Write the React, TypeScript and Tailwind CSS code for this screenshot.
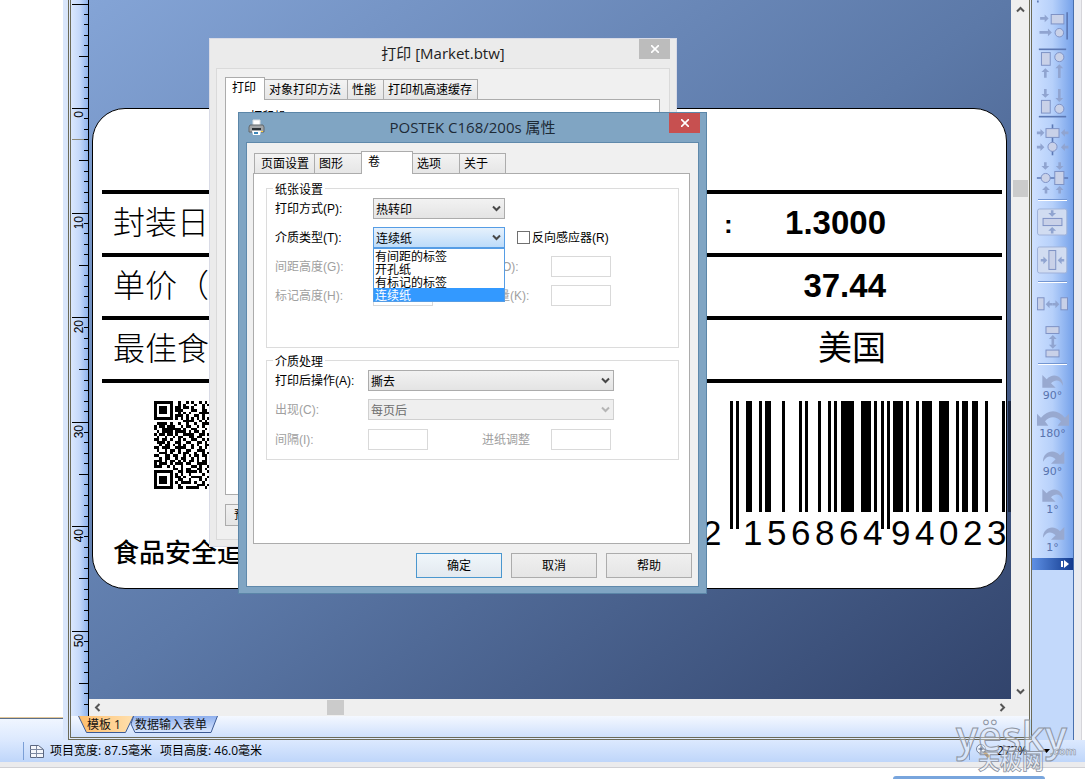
import { useState } from "react";
import type { ReactNode } from "react";

const BARS = [
  [0, 3, 1], [6, 3, 1], [16, 6, 0], [29, 3, 0], [35, 6, 0], [52, 3, 0], [69, 3, 0],
  [75, 3, 0], [88, 3, 0], [98, 3, 0], [104, 3, 0], [111, 13, 0], [131, 10, 0],
  [144, 3, 0], [151, 3, 1], [157, 3, 1], [163, 10, 0], [176, 3, 0], [186, 3, 0],
  [192, 10, 0], [209, 10, 0], [226, 3, 0], [232, 6, 0], [242, 6, 0], [255, 3, 0],
  [272, 3, 0],
];

const QR = [
  "#######..#..#.#..#.#.",
  "#.....#..#.#...#..#.#",
  "#.###.#.##.##.#...#..",
  "#.###.#.###...##..##.",
  "#.###.#..#.#.#...####",
  "#.....#.###.#..##.#..",
  "#######.#.#.#.#.#.#.#",
  "...........####..#.#.",
  ".####.#..#..#..#..###",
  "#.##.###..#.##..#.#..",
  "#..#######.#..##...#.",
  ".#.####.####.#.##.#..",
  "#.##.##.#..####..##.#",
  ".#..#..#.##..##.##...",
  "##.##.#..#.#..##..#.#",
  ".###.#..##..##..##.#.",
  "..#.##.#.#.#..#.#..##",
  "##.###..####..#..#.#.",
  ".#..#.##.#..##..###..",
  "..###.#..#.##..#..#.#",
  "##..##.##..#.#.##.##.",
  "..#.##..#.##..#.#..#.",
  "###.#.##.#.#.##.#.##.",
  "#.###.#.###.##..####.",
  "###..#.#..#...##.#..#",
  ".......##.#.##..##.#.",
  "#######..##.####.#..#",
  "#.....#.#.#..#....#..",
  "#.###.#.##.#..####..#",
  "#.###.#..##..#...#.#.",
  "#.###.#.#.####.#..#..",
  "#.....#..#......###.#",
  "#######..##.#####..#.",
];

const CJK = "font-['Open_Sans','Noto_Sans_CJK_SC',sans-serif]";
const FORM = "font-['Liberation_Sans','Noto_Sans_CJK_SC',sans-serif]";

function Ruler() {
  const ticks: number[] = [];
  for (let mm = -10; mm <= 57; mm++) ticks.push(mm);
  return (
    <div className="w-[18px] shrink-0 overflow-hidden border-r border-black bg-linear-to-r from-[#dbe8fd] via-[#c5d9fa] to-[#8fb3ec]">
      <svg width="18" height="716" aria-label="ruler">
        {ticks.map((mm) => {
          const y = Math.round(108 + mm * 10.45);
          const start = mm % 10 === 0 ? 1 : mm % 5 === 0 ? 8 : 13;
          return <rect key={mm} x={start} y={y} width={18 - start} height="1" fill="#000" />;
        })}
        <rect x="1" y="139" width="12" height="1" fill="#8d8a78" />
        {[0, 10, 20, 30, 40, 50].map((mm) => (
          <text
            key={mm}
            transform={`translate(12 ${Math.round(111 + mm * 10.45)}) rotate(-90)`}
            textAnchor="end"
            fontSize="12"
            fontFamily="Liberation Sans, sans-serif"
          >
            {mm}
          </text>
        ))}
      </svg>
    </div>
  );
}

function LabelRow({ name, value, colon }: { name: string; value: string; colon?: boolean }) {
  return (
    <div className="flex h-[59px] items-center pr-[120px] pb-[2px] pl-[20px]">
      <span className="text-[32px] font-light">{name}</span>
      <span className="ml-auto w-[60px] pt-1 text-[26px] font-bold">{colon ? ":" : ""}</span>
      <span className="w-[102px] text-right text-[33px] font-bold whitespace-nowrap">{value}</span>
    </div>
  );
}

function Rule() {
  return <div className="mr-1 ml-[9px] h-1 bg-black" />;
}

function LabelCanvas() {
  return (
    <div className="relative min-h-0 flex-1 overflow-hidden bg-linear-to-br from-[#84a4d6] via-[#5c79a8] to-[#32446c]">
      <div className="absolute top-[108px] left-[3px] h-[481px] w-[915px] rounded-[33px] border border-black bg-white pt-[81px] font-['Liberation_Sans','Noto_Sans_CJK_SC',sans-serif] text-black">
        <Rule />
        <LabelRow name="封装日" value="1.3000" colon />
        <Rule />
        <LabelRow name="单价（" value="37.44" />
        <Rule />
        <div className="flex h-[59px] items-center pr-[120px] pb-[2px] pl-[20px]">
          <span className="text-[32px] font-light">最佳食</span>
          <span className="ml-auto text-[34px]">美国</span>
        </div>
        <Rule />
        <svg className="mt-[18px] ml-[61px] h-[88px] w-[88px]" viewBox="0 0 33 33" shapeRendering="crispEdges">
          {QR.map((row, y) =>
            row.split("").map((c, x) => (c === "#" ? <rect key={`${x}-${y}`} x={x} y={y} width="1" height="1" /> : null)),
          )}
        </svg>
        <p className="mt-[44px] ml-[20px] text-[26px] leading-[40px] font-medium">食品安全追</p>
      </div>
      <svg className="absolute top-[401px] left-[641px]" width="281" height="128" shapeRendering="crispEdges">
        {BARS.map(([x, w, guard]) => (
          <rect key={x} x={x} width={w} height={guard ? 128 : 111} fill="#000" />
        ))}
        <rect x="278" width="3" height="111" fill="#1c2740" />
      </svg>
      <div className="absolute top-[513px] left-[613px] flex font-['Liberation_Sans',sans-serif] text-[35px] leading-[40px] text-black">
        <span className="w-[41px]">2</span>
        {"156864".split("").map((d, i) => (
          <span key={i} className="w-6">{d}</span>
        ))}
        <span className="w-1" />
        {"94023".split("").map((d, i) => (
          <span key={i} className="w-6">{d}</span>
        ))}
      </div>
    </div>
  );
}

function Chevron({ className, turn = 0 }: { className?: string; turn?: number }) {
  return (
    <svg className={className} width="9" height="9" viewBox="0 0 9 9" fill="none" stroke="currentColor" strokeWidth="2">
      <path d="M1 2.5 4.5 6 8 2.5" transform={`rotate(${turn} 4.5 4.5)`} />
    </svg>
  );
}

function SheetTab({ children, active }: { children: ReactNode; active?: boolean }) {
  return (
    <button
      className={`relative h-[17px] text-left text-[12px] leading-[15px] text-[#111] ${
        active ? "z-10 w-[56px] pl-[9px]" : "-ml-[4px] w-[88px] pl-[5px]"
      }`}
    >
      <svg className="absolute inset-0 h-full w-full" viewBox={active ? "0 0 56 17" : "0 0 88 17"}>
        <defs>
          <linearGradient id="tab-on" x2="1">
            <stop offset="0" stopColor="#ffbd6b" />
            <stop offset="1" stopColor="#ffe0ae" />
          </linearGradient>
          <linearGradient id="tab-off" x2="0" y2="1">
            <stop offset="0" stopColor="#8fb0ee" />
            <stop offset="1" stopColor="#dbe8ff" />
          </linearGradient>
        </defs>
        <path
          d={active ? "M.5 0 8.5 16.5h39L55.5 0" : "M3.5 0 1 8l4 8.5h76L87.5 0"}
          fill={active ? "url(#tab-on)" : "url(#tab-off)"}
          stroke="#3c5a94"
        />
      </svg>
      <span className="relative">{children}</span>
    </button>
  );
}

function Arrow({ x, y, turn = 0, len = 14, size = 12 }: { x: number; y: number; turn?: number; len?: number; size?: number }) {
  // x, y is the arrow tip
  return (
    <path
      transform={`translate(${x} ${y}) rotate(${turn})`}
      d={`M0 0 ${-size} ${-size} V-4 H${-size - len} V4 H${-size} V${size}Z`}
      fill="#90a4d0"
      stroke="none"
    />
  );
}

function Tool({ label, box, className, children }: { label: string; box: string; className: string; children: ReactNode }) {
  return (
    <button aria-label={label} className={`block w-full shrink-0 ${className}`}>
      <svg className="h-full w-full" viewBox={box} fill="#c9d1e8" stroke="#7d91c4" strokeWidth="3">
        {children}
      </svg>
    </button>
  );
}

function ToolSep() {
  return (
    <div className="flex h-2 shrink-0 items-center px-[6px]">
      <div className="h-[2px] w-full border-t border-[#7396d2] bg-white" />
    </div>
  );
}

function RotateTool({ text, kind }: { text: string; kind: "left" | "right" | "both" }) {
  return (
    <button className="flex h-[38px] w-full shrink-0 flex-col items-center pt-[5px] font-['DejaVu_Sans',sans-serif] text-[11px] leading-[14px] text-[#5873ae]">
      <svg width="32" height="16" viewBox="0 0 96 48" fill="#98a9d0">
        {kind === "left" && <path d="M16 6v38h40L42 31c14-14 28-10 36 7C79 10 49-4 29 19Z" />}
        {kind === "right" && <path d="M82 6v38H42l14-13C42 17 28 21 18 38 17 10 49-4 69 19Z" />}
        {kind === "both" && <path d="M0 8v36h34L24 31c14-16 34-16 48 0L62 44h34V8L84 20C63-6 33-6 12 20Z" />}
      </svg>
      {text}
    </button>
  );
}

function ToolBar() {
  return (
    <div className="flex w-[42px] shrink-0 flex-col border-r border-[#4970ad] bg-[#c3d9fb]">
      <div className="flex flex-col bg-linear-to-r from-[#cfe1ff] via-[#b6d0fa] to-[#76a2ea]">
        <Tool label="右对齐" box="96 0 126 126" className="h-[42px]">
          <path d="M114 0v6M204 36v84" stroke="#5c78b4" strokeWidth="5" />
          <Arrow x={147} y={55} />
          <rect x="155" y="43" width="39" height="29" />
          <Arrow x={157} y={98} len={26} />
          <circle cx="180" cy="99" r="13" />
        </Tool>
        <Tool label="顶端对齐" box="96 126 126 123" className="h-[41px]">
          <path d="M117 147h84" stroke="#5c78b4" strokeWidth="5" />
          <rect x="125" y="157" width="27" height="39" />
          <circle cx="180" cy="171" r="14" />
          <Arrow x={137} y={205} turn={-90} len={17} />
          <Arrow x={180} y={193} turn={-90} len={30} />
        </Tool>
        <Tool label="底端对齐" box="96 249 126 117" className="h-[39px]">
          <Arrow x={137} y={293} turn={90} len={15} />
          <Arrow x={180} y={306} turn={90} len={28} />
          <rect x="125" y="301" width="27" height="39" />
          <circle cx="180" cy="327" r="14" />
          <path d="M117 351h84" stroke="#5c78b4" strokeWidth="5" />
        </Tool>
        <Tool label="水平居中" box="96 366 126 108" className="h-9">
          <path d="M159 372v95" stroke="#5c78b4" strokeWidth="5" />
          <rect x="139" y="385" width="40" height="27" />
          <circle cx="159" cy="441" r="14" />
          <Arrow x={134} y={398} len={11} />
          <Arrow x={134} y={442} len={11} />
          <Arrow x={185} y={398} turn={180} len={11} />
          <Arrow x={185} y={442} turn={180} len={11} />
        </Tool>
        <Tool label="垂直居中" box="96 474 126 114" className="h-[38px]">
          <path d="M111 534h96" stroke="#5c78b4" strokeWidth="5" />
          <circle cx="138" cy="534" r="14" />
          <rect x="166" y="514" width="28" height="40" />
          <Arrow x={137} y={509} turn={90} len={11} />
          <Arrow x={181} y={509} turn={90} len={11} />
          <Arrow x={139} y={559} turn={-90} len={11} />
          <Arrow x={181} y={559} turn={-90} len={11} />
        </Tool>
        <ToolSep />
        <Tool label="页面垂直居中" box="96 612 126 108" className="h-9">
          <rect x="113" y="626" width="90" height="80" rx="6" fill="#d1dcf1" stroke="#9eb1d8" />
          <rect x="130" y="655" width="58" height="22" />
          <Arrow x={158} y={650} turn={90} len={8} />
          <Arrow x={158} y={681} turn={-90} len={8} />
        </Tool>
        <Tool label="页面水平居中" box="96 720 126 114" className="h-[38px]">
          <rect x="113" y="740" width="90" height="80" rx="6" fill="#d1dcf1" stroke="#9eb1d8" />
          <rect x="148" y="751" width="21" height="58" />
          <Arrow x={143} y={781} len={8} />
          <Arrow x={175} y={781} turn={180} len={8} />
        </Tool>
        <ToolSep />
        <Tool label="水平等距" box="96 18 126 96" className="h-8">
          <rect x="113" y="53" width="20" height="37" />
          <rect x="185" y="53" width="20" height="37" />
          <Arrow x={180} y={73} len={9} />
          <Arrow x={138} y={73} turn={180} len={9} />
        </Tool>
        <Tool label="垂直等距" box="96 114 126 126" className="h-[42px]">
          <rect x="139" y="139" width="40" height="21" />
          <rect x="139" y="211" width="40" height="21" />
          <Arrow x={160} y={165} turn={-90} len={9} />
          <Arrow x={160} y={207} turn={90} len={9} />
        </Tool>
        <ToolSep />
        <RotateTool text="90°" kind="left" />
        <RotateTool text="180°" kind="both" />
        <RotateTool text="90°" kind="right" />
        <RotateTool text="1°" kind="left" />
        <RotateTool text="1°" kind="right" />
      </div>
      <button aria-label="更多" className="flex h-3 items-center justify-end bg-linear-to-r from-[#5f90e4] to-[#123a8e] pr-1">
        <svg width="8" height="8" viewBox="0 0 8 8" fill="#fff">
          <path d="M0 1h2v6H0ZM3 0l5 4-5 4Z" />
        </svg>
      </button>
    </div>
  );
}

function StatusBar() {
  return (
    <footer className={`flex h-[22px] shrink-0 items-center bg-linear-to-b from-[#dce9fe] to-[#bfd6fa] text-[12px] text-black ${CJK}`}>
      <div className="ml-[23px] h-[18px] w-px bg-[#7b9fd6]" />
      <svg className="ml-[5px]" width="16" height="15" viewBox="0 0 16 15" fill="#f4f6fb" stroke="#5b6780">
        <path d="M1.500 1.500h8l5 4v8h-13Z" />
        <path d="M1 5.500h13M1 9.500h13M7.500 2v12" stroke="#7c88a0" />
      </svg>
      <span className="ml-[5px]">项目宽度: 87.5毫米</span>
      <span className="ml-2">项目高度: 46.0毫米</span>
      <div className="ml-auto h-[18px] w-px bg-[#7b9fd6]" />
      <button aria-label="缩放" className="ml-[5px]">
        <svg width="16" height="16" viewBox="0 0 16 16">
          <path d="m9 9 5 5" stroke="#b98a45" strokeWidth="3" />
          <circle cx="6" cy="6" r="4.500" fill="#eef5ff" stroke="#75829c" />
          <path d="M3.500 6h5M6 3.500v5" stroke="#4b5b7a" />
        </svg>
      </button>
      <span className="ml-[6px] w-[44px]">277%</span>
      <svg className="mr-[35px] ml-[2px]" width="7" height="4" viewBox="0 0 7 4">
        <path d="M0 0h7L3.500 4Z" />
      </svg>
    </footer>
  );
}

function Watermark() {
  return (
    <svg className="pointer-events-none absolute right-[7px] bottom-[4px]" width="126" height="62" viewBox="0 0 126 62">
      <g stroke="#8e95a3" fill="#f2f5fa" fillOpacity=".4" fontFamily="Open Sans, Noto Sans CJK SC, sans-serif">
        <text x="4" y="38" fontSize="41" fontWeight="600">yësky</text>
        <text x="98" y="42" fontSize="11" fontWeight="700" strokeWidth=".6">.com</text>
        <text x="26" y="56" fontSize="22" fontWeight="700" strokeWidth=".8">天极网</text>
      </g>
    </svg>
  );
}

function CloseButton({ className }: { className: string }) {
  return (
    <button aria-label="关闭" className={`absolute top-0 right-[6px] flex h-5 w-[31px] items-center justify-center ${className}`}>
      <svg width="8" height="8" viewBox="0 0 8 8" stroke="#fff" strokeWidth="1.600">
        <path d="m0 0 8 8M8 0 0 8" />
      </svg>
    </button>
  );
}

function Tab({ children, active, className }: { children: ReactNode; active?: boolean; className: string }) {
  return (
    <button
      role="tab"
      aria-selected={!!active}
      className={`border border-b-0 border-[#acacac] text-left text-[12px] whitespace-nowrap text-black ${
        active
          ? "relative z-10 -mb-px h-[23px] bg-white pb-[2px] pl-[6px]"
          : "-ml-px h-5 bg-linear-to-b from-[#f3f3f3] to-[#e6e6e6] pl-1"
      } ${className}`}
    >
      {children}
    </button>
  );
}

function PrintDialog() {
  return (
    <div className={`absolute top-[38px] left-[209px] flex h-[509px] w-[468px] flex-col border border-[#d9dbe6] bg-[#ebebeb] px-[6px] pb-[6px] ${CJK}`}>
      <h2 className="h-[29px] text-center text-[15px] leading-[28px] text-[#222]">打印 [Market.btw]</h2>
      <CloseButton className="bg-[#bcbcbc]" />
      <div className="flex flex-1 flex-col border border-[#dadada] bg-[#f0f0f0] px-2 pt-2">
        <div role="tablist" className={`flex items-end ${FORM}`}>
          <Tab active className="w-10">打印</Tab>
          <Tab className="w-[84px]">对象打印方法</Tab>
          <Tab className="w-[37px]">性能</Tab>
          <Tab className="w-[95px]">打印机高速缓存</Tab>
        </div>
        <div className="mr-px h-[396px] border border-[#acacac] bg-white pt-2 pl-6 text-[12px] leading-[18px]">打印机</div>
        <button className="mt-[9px] h-[22px] w-[80px] border border-[#acacac] bg-linear-to-b from-[#f0f0f0] to-[#e5e5e5] pl-2 text-left text-[12px]">
          预览
        </button>
      </div>
    </div>
  );
}

function Group({ title, className, children }: { title: string; className: string; children: ReactNode }) {
  return (
    <fieldset className={`border border-[#dcdcdc] px-2 ${className}`}>
      <legend className="-ml-[2px] h-5 px-[2px] pt-1 leading-4">{title}</legend>
      {children}
    </fieldset>
  );
}

function Select({
  id,
  value,
  options,
  className,
  open,
  disabled,
  onChange,
}: {
  id: string;
  value: string;
  options: string[];
  className: string;
  open?: boolean;
  disabled?: boolean;
  onChange?: (v: string) => void;
}) {
  const tone = open
    ? "border-[#569de5] bg-linear-to-b from-[#e6f1fc] to-[#bddcfa]"
    : disabled
      ? "border-[#d0d0d0] bg-[#efefef] text-[#6d6d6d]"
      : "border-[#acacac] bg-linear-to-b from-[#f2f2f2] to-[#e4e4e4]";
  return (
    <div className={`relative shrink-0 ${className}`}>
      <select
        id={id}
        value={value}
        disabled={disabled}
        onChange={(e) => onChange?.(e.target.value)}
        className={`block h-[21px] w-full appearance-none border pt-[2px] pl-[2px] leading-[18px] opacity-100 ${tone}`}
      >
        {options.map((o) => (
          <option key={o}>{o}</option>
        ))}
      </select>
      <Chevron className={`pointer-events-none absolute top-[6px] right-1 ${disabled ? "text-[#b5b5b5]" : "text-[#484848]"}`} />
      {open && (
        <ul className="absolute top-[21px] left-0 z-10 w-full border border-[#569de5] bg-white">
          {options.map((o) => (
            <li
              key={o}
              onClick={() => onChange?.(o)}
              className={`h-[13px] pl-px leading-[16px] ${o === value ? "bg-[#3399ff] text-white" : ""}`}
            >
              {o}
            </li>
          ))}
        </ul>
      )}
    </div>
  );
}

function NumberBox({ id }: { id: string }) {
  return <input id={id} disabled className="h-[21px] w-[60px] shrink-0 border border-[#d9d9d9] bg-white" />;
}

function DialogButton({ children, primary }: { children: ReactNode; primary?: boolean }) {
  return (
    <button
      className={`h-[25px] w-[86px] border bg-linear-to-b text-[12px] ${
        primary ? "border-[#4a97cf] from-[#f0f6fb] to-[#e2e9ef]" : "border-[#acacac] from-[#f0f0f0] to-[#e5e5e5]"
      }`}
    >
      {children}
    </button>
  );
}

function PropertiesDialog() {
  const [mode, setMode] = useState("热转印");
  const [media, setMedia] = useState("连续纸");
  const [after, setAfter] = useState("撕去");

  return (
    <div className="absolute top-[112px] left-[238px] flex h-[482px] w-[469px] flex-col border border-[#5b86a8] bg-[#80a5c3] px-[7px] pb-[6px]">
      <h2 className={`h-[29px] text-center text-[15px] leading-[29px] text-[#1d2a36] ${CJK}`}>POSTEK C168/200s 属性</h2>
      <svg className="absolute top-[6px] left-[9px]" width="17" height="17" viewBox="0 0 17 17">
        <path d="M5 1h7v6H5Z" fill="#fff" stroke="#d8dde2" />
        <path d="M2 6h13l1 2v5H1V8Z" fill="#a3a6a8" stroke="#62686d" />
        <path d="M4 9h9v2H4Z" fill="#2b3136" />
        <path d="M4 12h9l-1 4H5Z" fill="#fff" />
        <path d="M6 13h4v2H6Z" fill="#3d86b8" />
        <path d="M13 12h2v1h-2Z" fill="#ffd23e" />
      </svg>
      <CloseButton className="bg-[#c75050]" />
      <div className={`flex flex-1 flex-col border border-[#5f89ab] bg-[#f0f0f0] px-[6px] text-[12px] text-black ${FORM}`}>
        <div role="tablist" className="mt-2 ml-[2px] flex items-end">
          <Tab className="w-[61px] pl-[6px]">页面设置</Tab>
          <Tab className="w-12">图形</Tab>
          <Tab active className="-ml-px w-[52px]">卷</Tab>
          <Tab className="w-12">选项</Tab>
          <Tab className="w-[47px]">关于</Tab>
        </div>
        <div className="h-[371px] w-[437px] border border-[#acacac] bg-white pt-1 pr-[10px] pl-3">
          <Group title="纸张设置" className="h-[170px]">
            <div className="flex h-[21px] items-center">
              <label htmlFor="mode" className="w-[98px]">打印方式(P):</label>
              <Select id="mode" value={mode} options={["热转印", "热敏"]} onChange={setMode} className="w-[132px]" />
            </div>
            <div className="flex h-[37px] items-center">
              <label htmlFor="media" className="w-[98px]">介质类型(T):</label>
              <Select
                id="media"
                open
                value={media}
                options={["有间距的标签", "开孔纸", "有标记的标签", "连续纸"]}
                onChange={setMedia}
                className="w-[132px]"
              />
              <label className="ml-3 flex items-center gap-[2px]">
                <input type="checkbox" className="h-[13px] w-[13px] appearance-none border border-[#707070] bg-white" />
                反向感应器(R)
              </label>
            </div>
            <div className="flex h-[21px] items-center text-[#a0a0a0]">
              <label htmlFor="gap" className="w-[98px]">间距高度(G):</label>
              <NumberBox id="gap" />
              <label htmlFor="gap-offset" className="ml-[17px] w-[101px]">间距偏移(O):</label>
              <NumberBox id="gap-offset" />
            </div>
            <div className="flex h-[37px] items-center text-[#a0a0a0]">
              <label htmlFor="mark" className="w-[98px]">标记高度(H):</label>
              <NumberBox id="mark" />
              <label htmlFor="mark-offset" className="ml-[17px] w-[101px]">标记偏移量(K):</label>
              <NumberBox id="mark-offset" />
            </div>
          </Group>
          <Group title="介质处理" className="mt-[2px] h-[110px]">
            <div className="flex h-[21px] items-center">
              <label htmlFor="after" className="w-[93px]">打印后操作(A):</label>
              <Select id="after" value={after} options={["撕去", "剥离", "切刀"]} onChange={setAfter} className="w-[246px]" />
            </div>
            <div className="flex h-[37px] items-center">
              <label htmlFor="when" className="w-[93px] text-[#a0a0a0]">出现(C):</label>
              <Select id="when" disabled value="每页后" options={["每页后"]} className="w-[246px]" />
            </div>
            <div className="flex h-[23px] items-center text-[#a0a0a0]">
              <label htmlFor="every" className="w-[93px]">间隔(I):</label>
              <NumberBox id="every" />
              <label htmlFor="feed" className="ml-[54px] w-[69px]">进纸调整</label>
              <NumberBox id="feed" />
            </div>
          </Group>
        </div>
        <div className="mt-[9px] flex justify-end gap-[9px]">
          <DialogButton primary>确定</DialogButton>
          <DialogButton>取消</DialogButton>
          <DialogButton>帮助</DialogButton>
        </div>
      </div>
    </div>
  );
}

export default function App() {
  return (
    <div className={`relative flex min-h-screen flex-col overflow-hidden bg-white ${CJK}`}>
      <div className="flex flex-1">
        <div className="flex w-[63px] shrink-0 flex-col">
          <div className="flex-1 border-b border-[#e2c79a] bg-white" />
          <div className="h-[22px] border-t border-[#5b6f8a] bg-linear-to-b from-[#f0f6ff] to-[#dce9fe]" />
        </div>
        <div className="w-[5px] shrink-0 bg-[#d9e6fb]" />
        <div className="flex min-w-0 flex-1 flex-col border-x-[3px] border-b-[3px] border-double border-[#6b6a58] bg-[#dfeafd]">
          <div className="flex flex-1">
            <Ruler />
            <div className="flex min-w-0 flex-1">
              <div className="flex min-w-0 flex-1 flex-col">
                <LabelCanvas />
                <div className="flex h-[17px] shrink-0 items-center justify-between bg-[#efefef] px-1 text-[#555]">
                  <Chevron turn={90} />
                  <div className="mr-auto ml-[225px] h-[15px] w-[17px] bg-[#cbcbcb]" />
                  <Chevron turn={-90} />
                </div>
              </div>
              <div className="flex w-[18px] shrink-0 flex-col items-center bg-[#efefef] py-[5px] text-[#555]">
                <Chevron turn={180} />
                <div className="mt-[166px] mb-auto h-[17px] w-[15px] bg-[#cbcbcb]" />
                <Chevron className="mb-[15px]" />
              </div>
            </div>
          </div>
          <div className="flex h-[21px] bg-linear-to-b from-[#f4f8ff] to-[#cfe0fc] pl-[7px]">
            <SheetTab active>模板 1</SheetTab>
            <SheetTab>数据输入表单</SheetTab>
          </div>
        </div>
        <ToolBar />
        <div className="w-2 shrink-0 border-r border-[#d5d5da] bg-[#ebecf0]" />
        <div className="w-[3px] shrink-0 bg-white" />
      </div>
      <StatusBar />
      <div className="h-[6px] shrink-0 border-b border-[#d0d0d4] bg-[#ebebed]" />
      <div className="flex h-[11px] shrink-0 items-end justify-end pr-10">
        <div className="h-[3px] w-[152px] rounded-t-sm bg-[#78a5dd]" />
      </div>
      <PrintDialog />
      <PropertiesDialog />
      <Watermark />
    </div>
  );
}
